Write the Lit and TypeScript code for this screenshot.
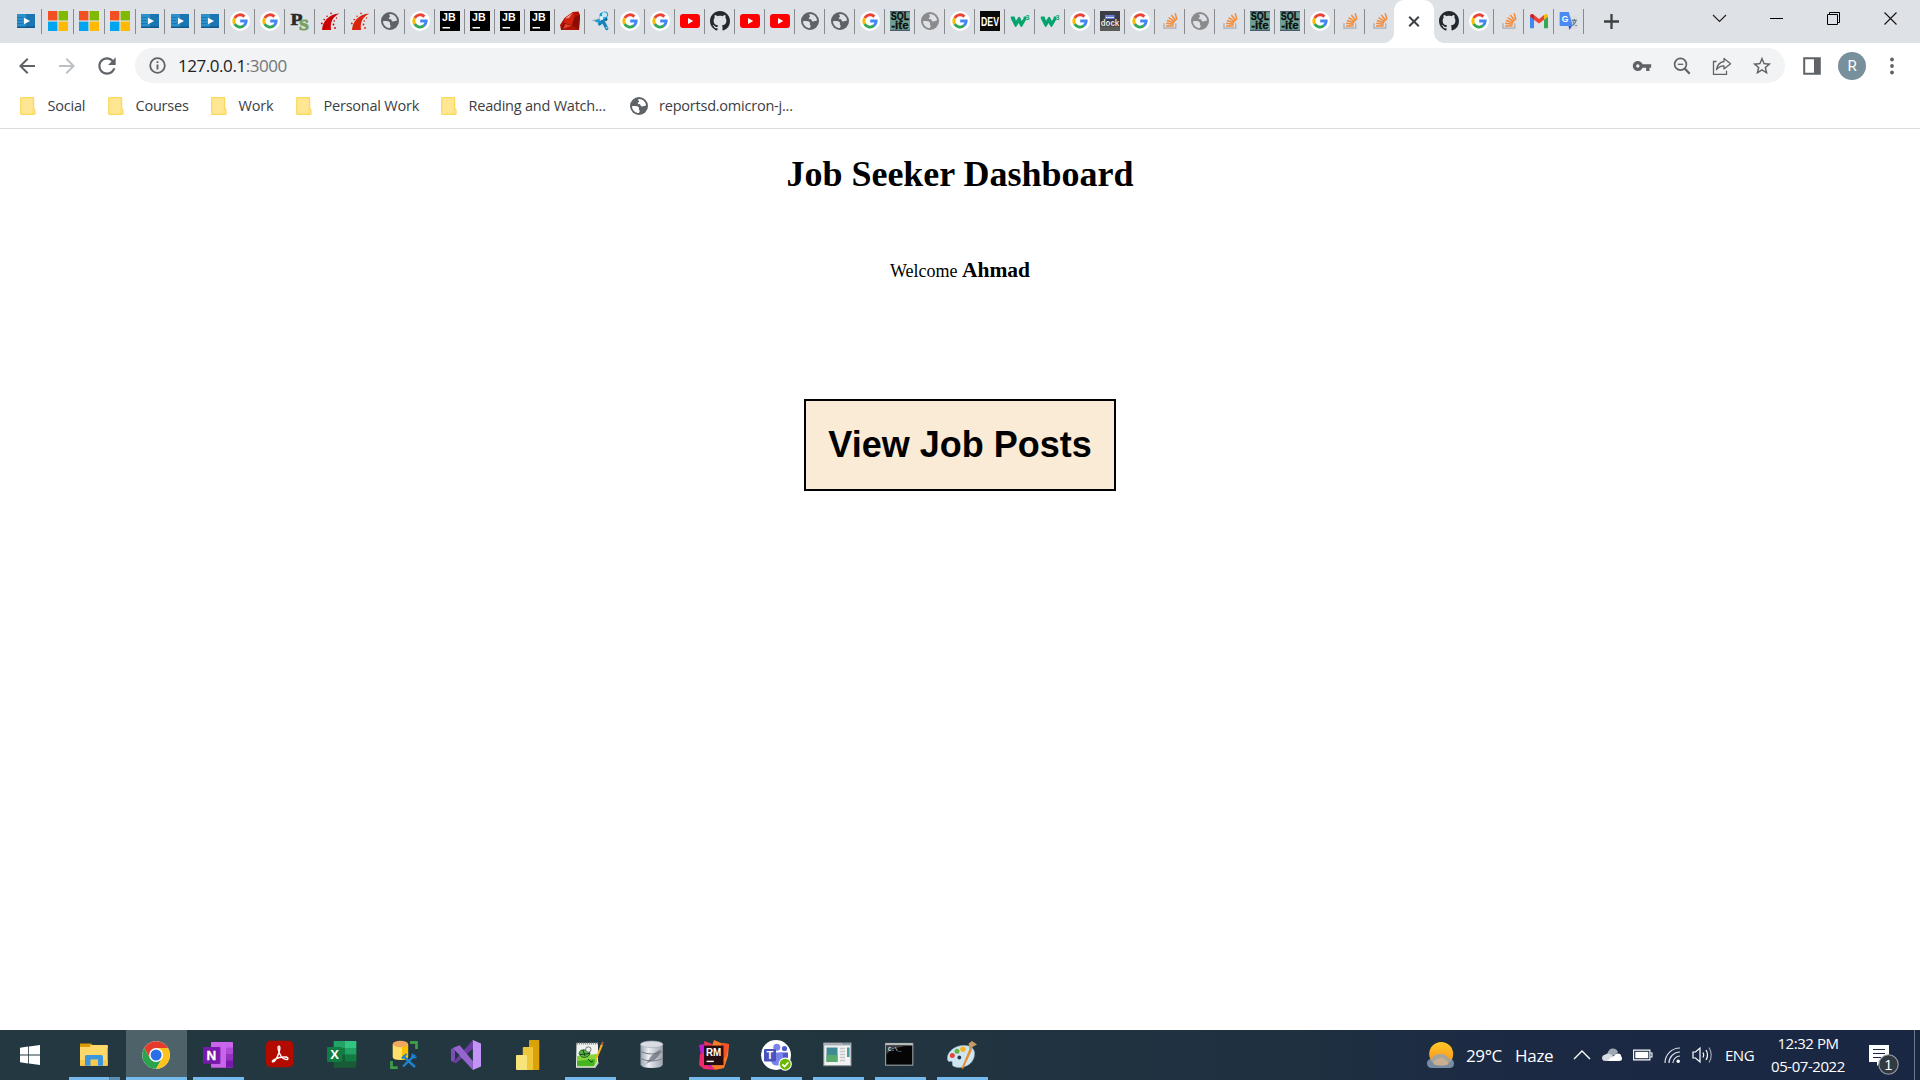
import { LitElement, html, css, TemplateResult } from "lit";
import { customElement } from "lit/decorators.js";
import { classMap } from "lit/directives/class-map.js";

/* ---------- tab favicons, 20 x 20 ---------- */
const video = () => html`<svg class="fav" viewBox="0 0 20 20">
  <rect x="1" y="3" width="18" height="14" fill="#1a75b0"/><rect x="1" y="3" width="9" height="14" fill="#2a91cc"/>
  <path d="M1 6.5h6M1 9.5h5M1 12.5h6" stroke="#1878b4" stroke-width="1"/><rect x="1" y="15.5" width="18" height="1.5" fill="#125a8c"/>
  <path d="M8 6.8v6.4l6-3.2z" fill="#fff"/></svg>`;

const microsoft = () => html`<svg class="fav" viewBox="0 0 20 20">
  <rect width="9.4" height="9.4" fill="#f25022"/><rect x="10.6" width="9.4" height="9.4" fill="#7fba00"/>
  <rect y="10.6" width="9.4" height="9.4" fill="#00a4ef"/><rect x="10.6" y="10.6" width="9.4" height="9.4" fill="#ffb900"/></svg>`;

const google = () => html`<svg class="fav" viewBox="0 0 20 20">
  <circle cx="10" cy="10" r="10" fill="#fff"/>
  <g fill="none" stroke-width="2.9">
    <path d="M4.700 6.900A6.200 6.200 0 0 1 14.400 5.600" stroke="#ea4335"/>
    <path d="M4.700 13.100A6.200 6.200 0 0 1 4.700 6.900" stroke="#fbbc05"/>
    <path d="M14 14.700A6.200 6.200 0 0 1 4.700 13.100" stroke="#34a853"/>
    <path d="M10.200 10h6A6.200 6.200 0 0 1 14 14.700" stroke="#4285f4"/>
  </g></svg>`;

const ps = () => html`<svg class="fav" viewBox="0 0 20 20">
  <text class="serif" x=".5" y="13.500" font-size="17.500" fill="#2a2a2a" stroke="#2a2a2a" stroke-width=".6" textLength="12" lengthAdjust="spacingAndGlyphs">P</text>
  <text class="serif" x="9" y="18.800" font-size="15.500" fill="#7a9f60" stroke="#7a9f60" stroke-width=".9" textLength="9.800" lengthAdjust="spacingAndGlyphs">S</text></svg>`;

const rails = (color: string) => html`<svg class="fav" viewBox="0 0 20 20">
  <path d="M2 19C2.600 11 8 3.400 19.400 2.600C14.600 5 9.600 9.600 11 19z" fill="${color}"/>
  <g fill="${color}"><circle cx="1.800" cy="12.400" r=".9"/><circle cx="4.200" cy="8.600" r=".8"/><circle cx="7" cy="5.200" r=".8"/><circle cx="11" cy="2.400" r=".8"/>
  <circle cx="16.500" cy="7" r=".7"/><circle cx="14.200" cy="10" r=".8"/><circle cx="13.500" cy="13.500" r=".9"/><circle cx="15" cy="17" r=".9"/></g></svg>`;

/* disc with two pale land masses */
const globe = (color: string, land = "#dee1e6") => html`<svg class="fav" viewBox="0 0 20 20">
  <circle cx="10" cy="10" r="9" fill="${color}"/>
  <path d="M9.300 3.100C12.900 2.600 16.700 5.600 17 9.300C16.200 10.400 15 9.600 14 10.300C12.600 11.200 11.800 10 11.400 9C10.900 7.900 8.600 8.700 8.800 7.100C8.900 6.100 10.200 6.300 10 5.200C9.900 4.500 8.900 4.200 9.300 3.100z" fill="${land}"/>
  <path d="M3 10.200C5.200 10 8.600 10 9.700 11.300C10.600 12.400 9.200 13 10.200 14C11.300 14.900 10.200 15.800 10 17C6.400 17.100 3 14 3 10.200z" fill="${land}"/></svg>`;

const jetbrains = () => html`<svg class="fav" viewBox="0 0 20 20">
  <rect width="20" height="20" fill="#000"/><text class="sans" x="2" y="9.800" font-size="10.500" fill="#fff" textLength="13.600" lengthAdjust="spacingAndGlyphs">JB</text>
  <rect x="2.500" y="16" width="7.500" height="1.500" fill="#fff"/></svg>`;

const ruby = () => html`<svg class="fav" viewBox="0 0 20 20">
  <path d="M1 19L0 14L4.500 7L13 1L18.500 .5L20 4L19 19z" fill="#b11203"/><path d="M1 19L4 12L12 14z" fill="#7b0c02"/>
  <path d="M4 12L4.600 7L13 1L14.500 6L12 14z" fill="#d1230f"/><path d="M14.500 6L20 4L19 19L12 14z" fill="#8c0d03"/>
  <path d="M5 7.500L12.500 2L9 7z" fill="#f0a596"/><path d="M5 13L12 14.500L3 18z" fill="#e0452c"/></svg>`;

const robot = () => html`<svg class="fav" viewBox="0 0 20 20">
  <path d="M1 9.500l9-2.500 1 5-3-.5z" fill="#9fb9c6"/><path d="M4.500 9.500l5-1.500.5 3.500-3.500-.3z" fill="#1d9ad2"/>
  <path d="M9.500 4q0-3 3-2.500 2.500-2 5 0 1.500 2-.3 4.500 1 2.500-1 4l-4 .5-2.500-3z" fill="#1d9ad2"/>
  <path d="M13 10l-3.500 3M13.500 11l3.300 6.500" stroke="#1583bb" stroke-width="3.200" stroke-linecap="round"/>
  <circle cx="14.500" cy="3.700" r="2.500" fill="#c9ebf7"/><circle cx="11.500" cy="7" r="1.900" fill="#e4f6fc"/><circle cx="16.300" cy="8.600" r="1.100" fill="#0d3e5c"/><circle cx="16.600" cy="16.800" r="1" fill="#8fd4ef"/></svg>`;

const youtube = () => html`<svg class="fav" viewBox="0 0 20 20"><rect y="3" width="20" height="14" rx="3.200" fill="#f00"/><path d="M8 7v6l5.200-3z" fill="#fff"/></svg>`;

const github = () => html`<svg class="fav" viewBox="0 0 16 16"><path fill="#24292f" d="M8 0C3.580 0 0 3.580 0 8c0 3.540 2.290 6.530 5.470 7.590.4.070.55-.17.55-.38 0-.19-.01-.82-.01-1.490-2.010.37-2.530-.49-2.690-.94-.09-.23-.48-.94-.82-1.130-.28-.15-.68-.52-.01-.53.63-.01 1.080.58 1.230.82.72 1.210 1.870.87 2.330.66.070-.52.28-.87.51-1.070-1.780-.2-3.640-.89-3.640-3.950 0-.87.31-1.590.82-2.150-.08-.2-.36-1.020.080-2.120 0 0 .67-.21 2.200.82.64-.18 1.320-.27 2-.27s1.360.090 2 .27c1.530-1.040 2.200-.82 2.200-.82.44 1.100.16 1.920.080 2.120.51.56.82 1.270.82 2.150 0 3.070-1.870 3.750-3.650 3.950.29.25.54.73.54 1.480 0 1.070-.01 1.930-.01 2.200 0 .21.15.46.55.38A8.010 8.010 0 0016 8c0-4.420-3.580-8-8-8z"/></svg>`;

const sqlite = () => html`<svg class="fav" viewBox="0 0 20 20">
  <rect width="20" height="20" fill="#6f9f92"/><path d="M0 .7h20M0 19.300h20" stroke="#4c5a70" stroke-width="1.300"/>
  <g class="sans" fill="#0a0f0e" stroke="#0a0f0e" stroke-width=".3"><text x=".8" y="8.600" font-size="10" textLength="18.400" lengthAdjust="spacingAndGlyphs">SQL</text>
  <text x="1.200" y="18.300" font-size="11" textLength="17.500" lengthAdjust="spacingAndGlyphs">-ite</text></g></svg>`;

const dev = () => html`<svg class="fav" viewBox="0 0 20 20"><rect width="20" height="20" fill="#0a0a0a"/>
  <text class="sans" x="1" y="14.800" font-size="13.500" fill="#fff" textLength="18" lengthAdjust="spacingAndGlyphs">DEV</text></svg>`;

const w3 = () => html`<svg class="fav" viewBox="0 0 20 20">
  <path d="M.8 5.500h3.700l1.500 4.200 2.200-3.400q1.300-1.200 2 .2l1.500 3.500 1.800-2.500.3-2h2.700q.3 3-2.300 6.500l-2 3.500q-1 1-1.800-.2L8.600 12l-2 3.300q-1.200 1.300-2-.3L.8 7.500z" fill="#04a56d"/>
  <text class="sans" x="15.600" y="8.600" font-size="8" fill="#04a56d" textLength="4" lengthAdjust="spacingAndGlyphs">3</text></svg>`;

const dock = () => html`<svg class="fav" viewBox="0 0 20 20"><rect width="20" height="20" fill="#3d3e45"/><rect y="15.500" width="20" height="4.500" fill="#5b5b58"/>
  <rect x="5" y="4" width="9.500" height="4" fill="#6a7fd8"/><path d="M6 6.500h8" stroke="#fff" stroke-dasharray="1.500 .6"/>
  <text class="sans" x=".8" y="15" font-size="9" fill="#e4e4e8" textLength="18.400" lengthAdjust="spacingAndGlyphs">dock</text></svg>`;

const stack = () => html`<svg class="fav" viewBox="0 0 20 20" fill="none">
  <path d="M4 12.200v4.900h11.800v-4.900" stroke="#a9adb3" stroke-width="1.300"/>
  <path d="M6 14.900h7.600M6.200 12.300l7.500.9M7 9.500l7.200 2.200M8.600 6.600l6.300 4M11.300 4l4.600 5.700M15.200 2.200l1.700 6.500" stroke="#f48a36" stroke-width="1.450"/></svg>`;

const gmail = () => html`<svg class="fav" viewBox="0 0 20 20">
  <path d="M1 5.500v11.800h4V8.500z" fill="#4285f4"/><path d="M15 8.500v8.800h4V5.500z" fill="#34a853"/>
  <path d="M1 5.500V4.600Q1.300 2.500 3.600 3L5 4v4.700z" fill="#c5221f"/><path d="M19 5.500V4.600Q18.700 2.500 16.400 3L15 4v4.700z" fill="#fbbc04"/>
  <path d="M5 4l5 3.900L15 4v4.700l-5 3.900-5-3.900z" fill="#ea4335"/></svg>`;

const translate = () => html`<svg class="fav" viewBox="0 0 20 20">
  <rect x="8" y="5" width="10.500" height="13" rx="1" fill="#dadce0"/><path d="M9.500 15h3.500l-2.500 4z" fill="#3c50d8"/>
  <path d="M1.500 1h8.300l4 14H1.500Q.6 15 .6 14V2Q.6 1 1.500 1z" fill="#4a8af4"/>
  <path d="M12.800 9.400h5M15.400 8v1.400M17 9.500q-.8 3.200-3.600 5M13.900 10.500q1 3 3.900 4.300" stroke="#607d8b" fill="none" stroke-width="1.100"/>
  <text class="sans" x="2.700" y="10.800" font-size="8.500" fill="#fff">G</text></svg>`;

/* ---------- toolbar icons, 24-unit grid ---------- */
const mat = (d: string, cls = "") => html`<svg class="mat ${cls}" viewBox="0 0 24 24"><path d="${d}"/></svg>`;
const BACK = "M20 11H7.830l5.590-5.590L12 4l-8 8 8 8 1.410-1.410L7.830 13H20v-2z";
const FORWARD = "M12 4l-1.410 1.410L16.170 11H4v2h12.170l-5.580 5.590L12 20l8-8z";
const RELOAD =
  "M17.650 6.350C16.200 4.900 14.210 4 12 4c-4.420 0-7.990 3.580-7.990 8s3.570 8 7.990 8c3.730 0 6.840-2.550 7.730-6h-2.080c-.82 2.330-3.040 4-5.650 4-3.310 0-6-2.690-6-6s2.690-6 6-6c1.660 0 3.140.69 4.220 1.780L13 11h7V4l-2.350 2.350z";
const KEY =
  "M12.650 10C11.830 7.670 9.610 6 7 6c-3.310 0-6 2.690-6 6s2.690 6 6 6c2.610 0 4.830-1.670 5.650-4H17v4h4v-4h2v-4H12.650zM7 14c-1.100 0-2-.9-2-2s.9-2 2-2 2 .9 2 2-.9 2-2 2z";
const STAR =
  "M22 9.240l-7.190-.62L12 2 9.190 8.630 2 9.240l5.460 4.730L5.820 21 12 17.270 18.180 21l-1.630-7.030L22 9.240zM12 15.400l-3.760 2.270 1-4.280-3.320-2.880 4.380-.38L12 6.100l1.710 4.040 4.380.38-3.320 2.880 1 4.280L12 15.400z";

const folder = () => html`<svg class="folder" viewBox="0 0 16 18">
  <path d="M1.500 0h11.800q.9 0 .9.900v10.300q1.400.3 1.400 2v3.300q0 1.500-1.500 1.500H1.200Q.1 18 .1 17V1Q.1 0 1.500 0z" fill="#fbd75b"/>
  <path d="M1.300 1.300h11.600v11.200q-.6 1-.3 4.200H1.300z" fill="#ffe693"/><path d="M13.300 12.600q1.300-.5 1.300 1v2.500q0 .7-.7.700t-.7-.9z" fill="#ffe693"/></svg>`;

/* ---------- taskbar icons, 30 x 30 ---------- */
const explorer = () => html`<svg class="app" viewBox="0 0 30 30">
  <path d="M1 3.500h11l1.500 1.500V8H1z" fill="#dc9c08"/><path d="M12 5h16q.7 0 .7.700V8H10z" fill="#ffd767"/>
  <path d="M1 7h9l3-1.500h15.700V25q0 .7-.7.700H1.700Q1 25.700 1 25z" fill="#ffd869"/><path d="M1 20h27.700v5.700H1z" fill="#f9c94c"/>
  <path d="M6 25.700V16.500Q6 15 7.500 15h15q1.500 0 1.500 1.500v9.200h-5v-6.200h-7.500v6.200z" fill="#3a97de"/></svg>`;

const chrome = () => html`<svg class="app" viewBox="0 0 30 30">
  <circle cx="15.100" cy="15" r="13.800" fill="#fff"/>
  <path d="M15.100 8.100h11.950A13.800 13.800 0 0 0 3.150 8.100L9.120 18.450z" fill="#e53a2e"/>
  <path d="M3.150 8.100A13.800 13.800 0 0 0 15.100 28.800L21.080 18.450H9.120z" fill="#2ba24c"/>
  <path d="M27.050 8.100A13.800 13.800 0 0 1 15.100 28.800L21.080 18.450L15.100 8.100z" fill="#fcc31e"/>
  <circle cx="15.100" cy="15" r="7" fill="#fff"/><circle cx="15.100" cy="15" r="5.500" fill="#2a6fe8"/></svg>`;

const onenote = () => html`<svg class="app" viewBox="0 0 30 30">
  <rect x="8" y="2" width="22" height="25.700" rx="1" fill="#ca64ea"/><path d="M23 7.500h7v7h-7z" fill="#ae4bd5"/><path d="M23 14h7v7h-7z" fill="#9332bf"/><path d="M23 20.500h7v6.200q0 1-1 1h-6z" fill="#7719aa"/>
  <path d="M8 7h9.500v17H8z" fill="#8e35bd"/><rect y="7" width="16.800" height="16.700" rx="1" fill="#7719aa"/>
  <text class="sans" x="3.400" y="20.200" font-size="13.500" fill="#fff" stroke="#fff" stroke-width=".3">N</text></svg>`;

const acrobat = () => html`<svg class="app" viewBox="0 0 30 30">
  <rect x="1" y=".8" width="27.300" height="26.500" rx="4.500" fill="#b30b00"/>
  <path d="M14 6.200c-1.800 0-.8 4.500 1 8 1.600 3.200 4.200 5.300 6.500 5.300 2.200 0 2-2.300-.8-2.500-3.500-.3-8 .8-11 2.300-2.700 1.400-2.800 2.700-1.700 2.600 2-.2 4.500-5.200 6-9.500 1.100-3.200 1.200-6.200 0-6.200z" fill="none" stroke="#fff" stroke-width="1.400"/></svg>`;

const excel = () => html`<svg class="app" viewBox="0 0 30 30">
  <rect x="6.700" y="1" width="22.600" height="26.700" rx="1" fill="#185c37"/><rect x="6.700" y="1" width="11.300" height="7" fill="#21a366"/><rect x="18" y="1" width="11.300" height="7" fill="#33c481"/>
  <rect x="6.700" y="8" width="11.300" height="6.700" fill="#107c41"/><rect x="18" y="8" width="11.300" height="6.700" fill="#21a366"/><rect x="18" y="14.700" width="11.300" height="6.500" fill="#107c41"/>
  <rect y="7" width="15.200" height="15" rx="1" fill="#107c41"/><text class="sans" x="3.200" y="19.300" font-size="13" fill="#fff">X</text></svg>`;

const ssms = () => html`<svg class="app" viewBox="0 0 30 30">
  <path d="M3.700 4v13q0 3 7.700 3t7.700-3V4z" fill="#ffdf6b"/><path d="M13 5h6.100v12q0 2.500-6.100 3z" fill="#fcc200"/><ellipse cx="11.400" cy="4" rx="7.700" ry="3.200" fill="#f0a860"/>
  <path d="M2.500 21v6.700h6.200M21 2.500h6.500V9" fill="none" stroke="#3f9a49" stroke-width="2.800"/>
  <path d="M14 16l12 11M26 15L14 26.500" stroke="#1f83d0" stroke-width="2.400"/><path d="M12 18l4.500-4.500 2 .5-4.500 5z" fill="#1f83d0"/><path d="M23.500 13.500l-.3 4 4.300-.2" stroke="#1f83d0" stroke-width="1.800" fill="none"/></svg>`;

const visualStudio = () => html`<svg class="app" viewBox="0 0 30 30">
  <path d="M0 9.200v11.600l2.200 1.300L4 19.300V10.700L2.500 7.500z" fill="#7a4fb3"/>
  <path d="M2.200 22.300L21.900 0v8.800L8.500 20.200 5 23.200z" fill="#6c3ca3"/>
  <path d="M2.200 7.700L8.700 5.200 21.900 21.200V30L4 10.700z" fill="#9565d0"/>
  <path d="M4 10.700v8.600l4.500-4.300z" fill="#223840"/>
  <path d="M21.900 0L30 3.500V26.500L21.900 30z" fill="#c394f5"/></svg>`;

const powerBi = () => html`<svg class="app" viewBox="0 0 30 30">
  <rect x="16" width="10.300" height="30" rx=".8" fill="#dba109"/><path d="M10.600 7h8.700q.8 0 .8.800V30H9.800V7.800q0-.8.8-.8z" fill="#eec63a"/>
  <path d="M3.800 15h9.400q.8 0 .8.800V30H3.800q-.8 0-.8-.8V15.800q0-.8.8-.8z" fill="#f8e27a"/></svg>`;

const notepadpp = () => html`<svg class="app" viewBox="0 0 30 30">
  <path d="M1.500 3h21.500v20l-3 4.500H1z" fill="#f0f2f0"/><path d="M2 16l20-2v8l-3 4.500H2z" fill="#86d63b"/><path d="M2 21l18-2-1 7H2z" fill="#46b321"/>
  <path d="M2 3.500h21" stroke="#8b8f8d" stroke-width="2" stroke-dasharray="1.200 .8"/><path d="M1 27.300h19l3.500-5" stroke="#b9bdbb" stroke-width="1.200" fill="none"/>
  <path d="M4 13.500q1-4.500 6-3.500l4 1q2.500 2.500-1 5.500-5 2-7.500-.5z" fill="#57b845" stroke="#1f5a24" stroke-width=".9"/><circle cx="13.300" cy="9.500" r="2.700" fill="#eaf3ea" stroke="#555" stroke-width=".8"/><path d="M5 14.500l10-1M8 10l2 6M13 19l3 3 2-1" stroke="#14401a" fill="none"/>
  <path d="M20.500 18L26 4l2 1-6 14-2 2z" fill="#f5b021"/><path d="M26 4l1-2.500 1.700.8L28 5z" fill="#b3543d"/></svg>`;

const database = () => html`<svg class="app" viewBox="0 0 30 30">
  <defs><linearGradient id="steel"><stop stop-color="#9ba0ac"/><stop offset=".35" stop-color="#eceef3"/><stop offset="1" stop-color="#9da2af"/></linearGradient></defs>
  <path d="M3.500 4v20.500q1 3.500 11.300 3.500t11-3.500V4z" fill="url(#steel)"/><ellipse cx="14.700" cy="4.300" rx="11.200" ry="3.300" fill="#d9dce3" stroke="#a5a9b3" stroke-width=".6"/>
  <path d="M3.500 11.500q11 5 22.300 0M3.500 18.500q11 5 22.300 0" fill="none" stroke="#7b808b" stroke-width="1"/><path d="M5 26.500Q9 24 11 21q4-8 13-11.500-1.500 9-10 12-4 1-9 5z" fill="#6b707b" opacity=".75"/></svg>`;

const rubymine = () => html`<svg class="app" viewBox="0 0 30 30">
  <path d="M0 5l11-2 6 6-2 20-11-4z" fill="#c31bd0"/><path d="M5 1l8 3 2 6-9-1z" fill="#f0364f"/><path d="M15 0l7 3 8 1-1 12-4 12-9 2-8-10z" fill="#fb7a24"/><path d="M1 14l5-2v12l12 6-13-1-5-4z" fill="#f2296c"/><path d="M22 3l8 1-3 13-5 2z" fill="#f5512b"/>
  <rect x="5" y="5.600" width="19.500" height="19.500" fill="#250d12"/><text class="sans" x="7" y="15.700" font-size="10.500" fill="#fff" textLength="15.300" lengthAdjust="spacingAndGlyphs">RM</text><rect x="7.600" y="20.700" width="7.200" height="1.400" fill="#fff"/></svg>`;

const teams = () => html`<svg class="app" viewBox="0 0 30 30">
  <circle cx="15" cy="15" r="15" fill="#fff"/><circle cx="15.800" cy="7.300" r="3.500" fill="#7b83eb"/><circle cx="23.500" cy="8.500" r="2.600" fill="#5059c9"/>
  <path d="M19 12.500h8v6q0 4-4 4h-4z" fill="#5059c9"/><path d="M10 12.500h12v7q0 6-6 6t-6-6z" fill="#7b83eb"/>
  <rect x="3" y="9" width="12" height="12.500" rx="1" fill="#4a53bd"/><text class="sans" x="5.600" y="19.200" font-size="11" fill="#fff">T</text>
  <circle cx="24.200" cy="24.200" r="6.600" fill="#fff"/><circle cx="24.200" cy="24.200" r="5.500" fill="#6bb700"/><path d="M21.300 24.400l2.200 2.200 3.800-4.200" fill="none" stroke="#fff" stroke-width="1.600"/></svg>`;

const windowApp = () => html`<svg class="app" viewBox="0 0 30 30">
  <rect x=".8" y="3" width="27.200" height="22.700" fill="#f2f2f2" stroke="#8c9599"/><rect x=".8" y="3" width="27.200" height="2.500" fill="#a9afb3"/><path d="M20 3.800h7" stroke="#5f7fa0" stroke-dasharray="2 .6"/>
  <rect x="3.500" y="7.500" width="11" height="14.500" fill="#3f8a93"/><rect x="3.500" y="15" width="11" height="7" fill="#58ab6c"/><path d="M17 8.500h5M17 11.500h5M17 14.500h5M17 17.500h5M17 20.500h5" stroke="#c5c8ca" stroke-width="1.400"/>
  <rect x="24" y="7.500" width="2.600" height="9.500" fill="#4a9aa0"/></svg>`;

const terminal = () => html`<svg class="app" viewBox="0 0 30 30">
  <rect x=".6" y="3.500" width="27.200" height="21.700" fill="#050505" stroke="#8f979b" stroke-width="1.200"/><rect x=".6" y="3" width="27.200" height="2.500" fill="#b4b9bc"/>
  <path d="M1.200 5.500h26q-18 .5-26 9z" fill="#3b3d3f"/><text class="mono" x="3" y="11" font-size="5.500" fill="#e5e5e5">C:\\_</text></svg>`;

const paint = () => html`<svg class="app" viewBox="0 0 30 30">
  <path d="M17 5.500c-9 0-16.500 6-16.500 12.500 0 5 2.500 3 4 3.200 2 .3-.5 4 2.500 5.300 8 3 20.500-1.500 20.500-13 0-5-4-8-10.500-8z" fill="#cfe6f2" stroke="#9dc0d3" stroke-width=".6"/>
  <circle cx="12.300" cy="17.500" r="1.900" fill="#21394a"/><circle cx="5.300" cy="15.500" r="2.500" fill="#e2453a"/><circle cx="10" cy="11.300" r="2.500" fill="#62b544"/><circle cx="16" cy="9.200" r="2.700" fill="#fbb31c"/>
  <path d="M16 29l-1.500-.8L22.500 9l2.500 1z" fill="#e98b2a"/><path d="M22.300 9.500l-.7-6L25 1l5 3.500-4.500 2.500-1 3.500z" fill="#c79a63"/></svg>`;

interface Tab { icon?: () => TemplateResult; kind?: string }
const grey = () => globe("#5f6368");
const pale = () => globe("#8b8b8b");
const redRails = () => rails("#cc0000");
const newRails = () => rails("#d9230f");

const TABS: Tab[] = [
  { icon: video, kind: "first" },
  { icon: microsoft, kind: "wide" }, { icon: microsoft, kind: "mid" }, { icon: microsoft, kind: "mid" },
  { icon: video, kind: "slim" },
  ...[
    video, video, google, google, ps, redRails, newRails, grey, google, jetbrains, jetbrains, jetbrains, jetbrains,
    ruby, robot, google, google, youtube, github, youtube, youtube, grey, grey, google, sqlite, pale, google, dev,
    w3, w3, google, dock, google, stack, pale, stack, sqlite, sqlite, google, stack,
  ].map((icon) => ({ icon })),
  { icon: stack, kind: "before" },
  { kind: "active" },
  ...[github, google, stack, gmail, translate].map((icon) => ({ icon })),
];

const BOOKMARKS = ["Social", "Courses", "Work", "Personal Work", "Reading and Watch..."];

const APPS: { icon: () => TemplateResult; open?: boolean; kind?: string }[] = [
  { icon: explorer, open: true, kind: "grouped" }, { icon: chrome, open: true, kind: "current" }, { icon: onenote, open: true },
  { icon: acrobat }, { icon: excel }, { icon: ssms }, { icon: visualStudio }, { icon: powerBi },
  { icon: notepadpp, open: true }, { icon: database }, { icon: rubymine, open: true }, { icon: teams, open: true },
  { icon: windowApp, open: true }, { icon: terminal, open: true }, { icon: paint, open: true },
];

@customElement("app-root")
export class AppRoot extends LitElement {
  static styles = css`
    :host { display: flex; flex-direction: column; width: 1920px; height: 1080px; overflow: hidden; background: #fff; font-family: "Open Sans", "Noto Sans", sans-serif; }
    svg { display: block; flex: none; overflow: visible; }
    .sans { font-family: "Liberation Sans", sans-serif; font-weight: 700; }
    .serif { font-family: "Liberation Serif", serif; font-weight: 700; }
    .mono { font-family: "Liberation Mono", monospace; font-weight: 700; }

    .tabs { display: flex; height: 43px; background: #dee1e6; flex: none; }
    .tab { box-sizing: border-box; width: 30px; padding: 9px 0 0 5px; display: flex; align-items: flex-start; justify-content: space-between; }
    .tab::after { content: ""; width: 1px; height: 25px; background: #888a8e; }
    .fav { width: 20px; height: 20px; margin-top: 2px; }
    .first { width: 42px; padding-left: 16px; }
    .wide { width: 32px; padding-left: 6px; }
    .mid { width: 31px; }
    .slim { width: 29px; padding-left: 4px; }
    .before { width: 29px; }
    .before::after { display: none; }
    .active { position: relative; width: 40px; background: #fff; border-radius: 10px 10px 0 0; padding: 15px 0 0 13px; }
    .active::after { position: absolute; left: 40px; top: 33px; width: 10px; height: 10px; background: radial-gradient(circle at 100% 0, transparent 9.600px, #fff 10px); }
    .active::before { content: ""; position: absolute; left: -10px; top: 33px; width: 10px; height: 10px; background: radial-gradient(circle at 0 0, transparent 9.600px, #fff 10px); }
    .plus { margin: 14px 0 0 20px; }
    .controls { display: flex; margin: 0 1px 0 auto; padding-top: 10px; }
    .controls svg { width: 57px; height: 17px; }

    .toolbar { display: flex; align-items: center; height: 45px; padding: 0 8px 0 7px; flex: none; box-sizing: border-box; }
    .slot { width: 40px; height: 35px; display: flex; align-items: center; justify-content: center; flex: none; }
    .mat { width: 24px; height: 24px; fill: #5f6368; }
    .mat.off { fill: #bdc1c6; }
    .mat.reload { width: 26px; height: 26px; }
    .mat.key { width: 20px; height: 20px; }
    .mat.star { width: 22px; height: 22px; }
    .address { display: flex; align-items: center; width: 1650px; height: 35px; margin: 0 7px 0 8px; padding: 0 3px 0 14px; box-sizing: border-box; background: #f1f3f4; border-radius: 18px; }
    .url { margin-left: 12px; font-size: 17px; letter-spacing: -0.45px; color: #202124; flex: 1; line-height: 34px; }
    .port { color: #72767a; }
    .avatar { width: 28px; height: 28px; border-radius: 50%; background: #78909c; color: #fff; font: 15px/28px "Roboto", sans-serif; text-align: center; }

    .bookmarks { display: grid; grid-template-columns: 88px 103px 85px 145px 189px 1fr; align-items: center; height: 41px; padding: 0 0 5px 20px; box-sizing: border-box; border-bottom: 1px solid #dadce0; flex: none; }
    .bookmark { display: flex; align-items: center; white-space: nowrap; font-size: 14.500px; letter-spacing: -0.22px; line-height: 20px; color: #3c4043; }
    .folder { width: 16px; height: 18px; margin-right: 11.500px; }
    .bookmark .fav { margin: 0 10px 0 -1px; }

    .page { flex: 1; display: flex; flex-direction: column; align-items: center; font-family: "Liberation Serif", serif; color: #000; font-size: 18px; }
    h1 { margin: 25px 0 64px; font-size: 36px; line-height: 40px; letter-spacing: -0.02px; }
    p { margin: 0; line-height: 24px; height: 25px; }
    p b { font-size: 21.500px; }
    button { box-sizing: border-box; width: 312px; height: 92px; margin-top: 116px; padding: 0 0 2px; background: #faebd7; border: 2px solid #000; font: 700 36px/41px "Liberation Sans", Arial, sans-serif; color: #000; }

    .taskbar { display: flex; height: 50px; flex: none; background: linear-gradient(90deg, #233840 0, #22363f 40%, #1f3041 68%, #1b2943 80%, #1a2743 100%); color: #fff; }
    .start { width: 64px; box-sizing: border-box; padding: 15px 0 0 20px; }
    .task { position: relative; width: 62px; box-sizing: border-box; padding: 10px 0 0 15px; }
    .app { width: 30px; height: 30px; }
    .open::after { content: ""; position: absolute; left: 5px; bottom: 0; width: 51px; height: 3px; background: #76b9ed; }
    .grouped::after { background: linear-gradient(90deg, #76b9ed 40px, #4c7394 40px, #5e8db2 41px); }
    .current { border-right: 1px solid transparent; background: #4e6269; background-clip: padding-box; }
    .current::after { left: 0; width: 61px; }
    .tray { display: flex; align-items: center; margin-left: auto; font-size: 17px; white-space: nowrap; }
    .temp { width: 49px; margin-left: 10px; letter-spacing: -0.4px; }
    .haze { width: 57px; letter-spacing: -0.3px; }
    .more, .cloud { width: 20px; height: 20px; }
    .cloud { margin-left: 10px; }
    .battery, .wifi { margin-left: 11px; }
    .volume { margin-left: 10px; }
    .lang { width: 40px; margin-left: 11px; font-size: 15px; letter-spacing: -0.5px; }
    .clock { width: 86px; text-align: center; font-size: 15px; line-height: 23px; letter-spacing: -0.45px; padding-bottom: 1px; }
    .notes { margin-left: 17px; }
    .count { font-weight: 400; }
    .peek { width: 5px; height: 50px; margin-left: 14px; border-left: 1px solid #6f7a8b; }
  `;

  private tab(t: Tab) {
    const cls = { tab: true, [t.kind ?? "plain"]: true };
    return html`<div class=${classMap(cls)}>${t.icon
      ? t.icon()
      : html`<svg width="14" height="14" viewBox="0 0 14 14"><path d="M2.200 1.700l9.600 9.600M11.800 1.700l-9.600 9.600" stroke="#3c4043" stroke-width="2"/></svg>`}</div>`;
  }

  render() {
    return html`
      <div class="tabs">
        ${TABS.map((t) => this.tab(t))}
        <svg class="plus" width="15" height="15" viewBox="0 0 15 15"><path d="M7.500 0v15M0 7.500h15" stroke="#3c4043" stroke-width="2.300"/></svg>
        <div class="controls">
          <svg viewBox="0 0 57 17"><path d="M22 5l6.500 6.500L35 5" fill="none" stroke="#222" stroke-width="1.200"/></svg>
          <svg viewBox="0 0 57 17"><path d="M22 8.500h13" stroke="#000"/></svg>
          <svg viewBox="0 0 57 17"><path d="M22.500 4.500h10v10h-10zM24.500 4.500v-2h10v10h-2" fill="none" stroke="#000"/></svg>
          <svg viewBox="0 0 57 17"><path d="M22.500 2.500l12 12M34.500 2.500l-12 12" stroke="#111" stroke-width="1.100"/></svg>
        </div>
      </div>

      <div class="toolbar">
        <div class="slot">${mat(BACK)}</div>
        <div class="slot">${mat(FORWARD, "off")}</div>
        <div class="slot">${mat(RELOAD, "reload")}</div>
        <div class="address">
          <svg width="17" height="17" viewBox="0 0 17 17"><circle cx="8.500" cy="8.500" r="7.300" fill="none" stroke="#5f6368" stroke-width="1.800"/><path d="M8.500 7.500v5M8.500 4.300v1.800" stroke="#5f6368" stroke-width="1.900"/></svg>
          <div class="url">127.0.0.1<span class="port">:3000</span></div>
          <div class="slot">${mat(KEY, "key")}</div>
          <div class="slot"><svg width="18" height="18" viewBox="0 0 18 18" fill="none" stroke="#5f6368"><circle cx="7.500" cy="7.300" r="5.900" stroke-width="1.700"/><path d="M11.700 11.500l5 5.200" stroke-width="2.300"/><path d="M4.800 7.300h5.400" stroke-width="1.300"/></svg></div>
          <div class="slot"><svg width="20" height="20" viewBox="0 0 20 20" fill="none" stroke="#5f6368" stroke-width="1.300"><path d="M4.500 5.500H1.500v12.800h13v-3.500"/><path d="M12 2.500l6.600 5.200-6.600 5.200v-3q-4.500-.2-7.500 3.800 1-7.200 7.500-8.200z" stroke-linejoin="round"/></svg></div>
          <div class="slot">${mat(STAR, "star")}</div>
        </div>
        <div class="slot"><svg width="18" height="18" viewBox="0 0 18 18"><path d="M1.200 1.200h15.600v15.600H1.200z" fill="#fff" stroke="#5f6368" stroke-width="2"/><path d="M11 1h6v16h-6z" fill="#5f6368"/></svg></div>
        <div class="slot"><div class="avatar">R</div></div>
        <div class="slot"><svg width="4" height="18" viewBox="0 0 4 18" fill="#5f6368"><circle cx="2" cy="2.500" r="1.900"/><circle cx="2" cy="9" r="1.900"/><circle cx="2" cy="15.500" r="1.900"/></svg></div>
      </div>

      <div class="bookmarks">
        ${BOOKMARKS.map((b) => html`<div class="bookmark">${folder()}<span>${b}</span></div>`)}
        <div class="bookmark">${globe("#5f6368", "#fff")}<span>reportsd.omicron-j...</span></div>
      </div>

      <div class="page">
        <h1>Job Seeker Dashboard</h1>
        <p>Welcome <b>Ahmad</b></p>
        <button>View Job Posts</button>
      </div>

      <div class="taskbar">
        <div class="start"><svg width="20" height="20" viewBox="0 0 20 20" fill="#fff"><path d="M0 2.800L8.200 1.600V9.500H0zM9 1.500L20 0v9.500H9zM0 10.500h8.200v7.900L0 17.200zM9 10.500h11V20L9 18.500z"/></svg></div>
        ${APPS.map((a) => html`<div class=${classMap({ task: true, open: !!a.open, [a.kind ?? "normal"]: true })}>${a.icon()}</div>`)}
        <div class="tray">
          <svg width="30" height="30" viewBox="0 0 30 30">
            <defs><linearGradient id="sun" x2="0" y2="1"><stop stop-color="#ffc928"/><stop offset="1" stop-color="#fb8c1c"/></linearGradient></defs>
            <circle cx="15.200" cy="14" r="12" fill="url(#sun)"/>
            <path d="M6 28q-5 0-5-4.800 0-4 4.500-4.500Q8 14 14.500 14q6 0 8 4.500 5.500.3 5.500 5 0 4.500-5 4.500z" fill="#8fa5bb" opacity=".8"/><path d="M8 25q-2-5 4-6 4-3 8 1 4 3 1 5z" fill="#d8b48c" opacity=".7"/></svg>
          <span class="temp">29°C</span><span class="haze">Haze</span>
          <svg class="more" viewBox="0 0 20 20"><path d="M2 14l8-8 8 8" fill="none" stroke="#fff" stroke-width="1.400"/></svg>
          <svg class="cloud" viewBox="0 0 20 20"><path d="M4 12Q2 10 5.500 8.300 7 3 11.500 3.500q3.500.5 4.500 3.500l-3 3z" fill="#9fa8b5"/><path d="M3.500 16Q0 16 0 13q0-3 3.500-3.500L7 8.500l8 4.500-3 3z" fill="#d7dbe0"/><path d="M6 16l2-3 3.500-1Q13 8.300 16 8.500q3 .2 3.200 2.800.8.900.8 2.200 0 2.500-3 2.500z" fill="#fff"/></svg>
          <svg class="battery" width="20" height="12" viewBox="0 0 20 12"><path d="M.6 1.100h16.300v9.800H.6zM17.500 4h1.500v4h-1.500" fill="none" stroke="#fff" stroke-width="1.100"/><path d="M2.300 2.800h13v6.400h-13z" fill="#fff"/></svg>
          <svg class="wifi" width="18" height="18" viewBox="0 0 18 18" fill="none" stroke="#d8dce2" stroke-width="1.200"><path d="M1 17A15 15 0 0 1 16 2M5 17A11 11 0 0 1 16 6M9 17a7 7 0 0 1 7-7"/><circle cx="14.200" cy="15.300" r="1.700" fill="#fff" stroke="none"/></svg>
          <svg class="volume" width="22" height="20" viewBox="0 0 22 20" fill="none" stroke="#fff" stroke-width="1.200"><path d="M1 7h2.500L8 3v14l-4.500-4H1z"/><path d="M11 7.500q1.500 2.500 0 5M14 5q3 5 0 10"/><path d="M17 2.500q4.500 7.500 0 15" stroke="#9aa3b0"/></svg>
          <span class="lang">ENG</span>
          <div class="clock">12:32 PM<br>05-07-2022</div>
          <svg class="notes" width="32" height="32" viewBox="0 0 32 32"><path d="M1 6h20v17H13l-4 4v-4H1z" fill="#fff"/><path d="M5 10.500h12M5 14.500h12M5 18.500h8" stroke="#1a2743" stroke-width="1.200"/>
            <circle cx="20.500" cy="25.500" r="9.700" fill="#333941" stroke="#9aa0a8" stroke-width="1.100"/><text class="sans count" x="16.600" y="30.500" font-size="14" fill="#fff">1</text></svg>
          <div class="peek"></div>
        </div>
      </div>
    `;
  }
}
